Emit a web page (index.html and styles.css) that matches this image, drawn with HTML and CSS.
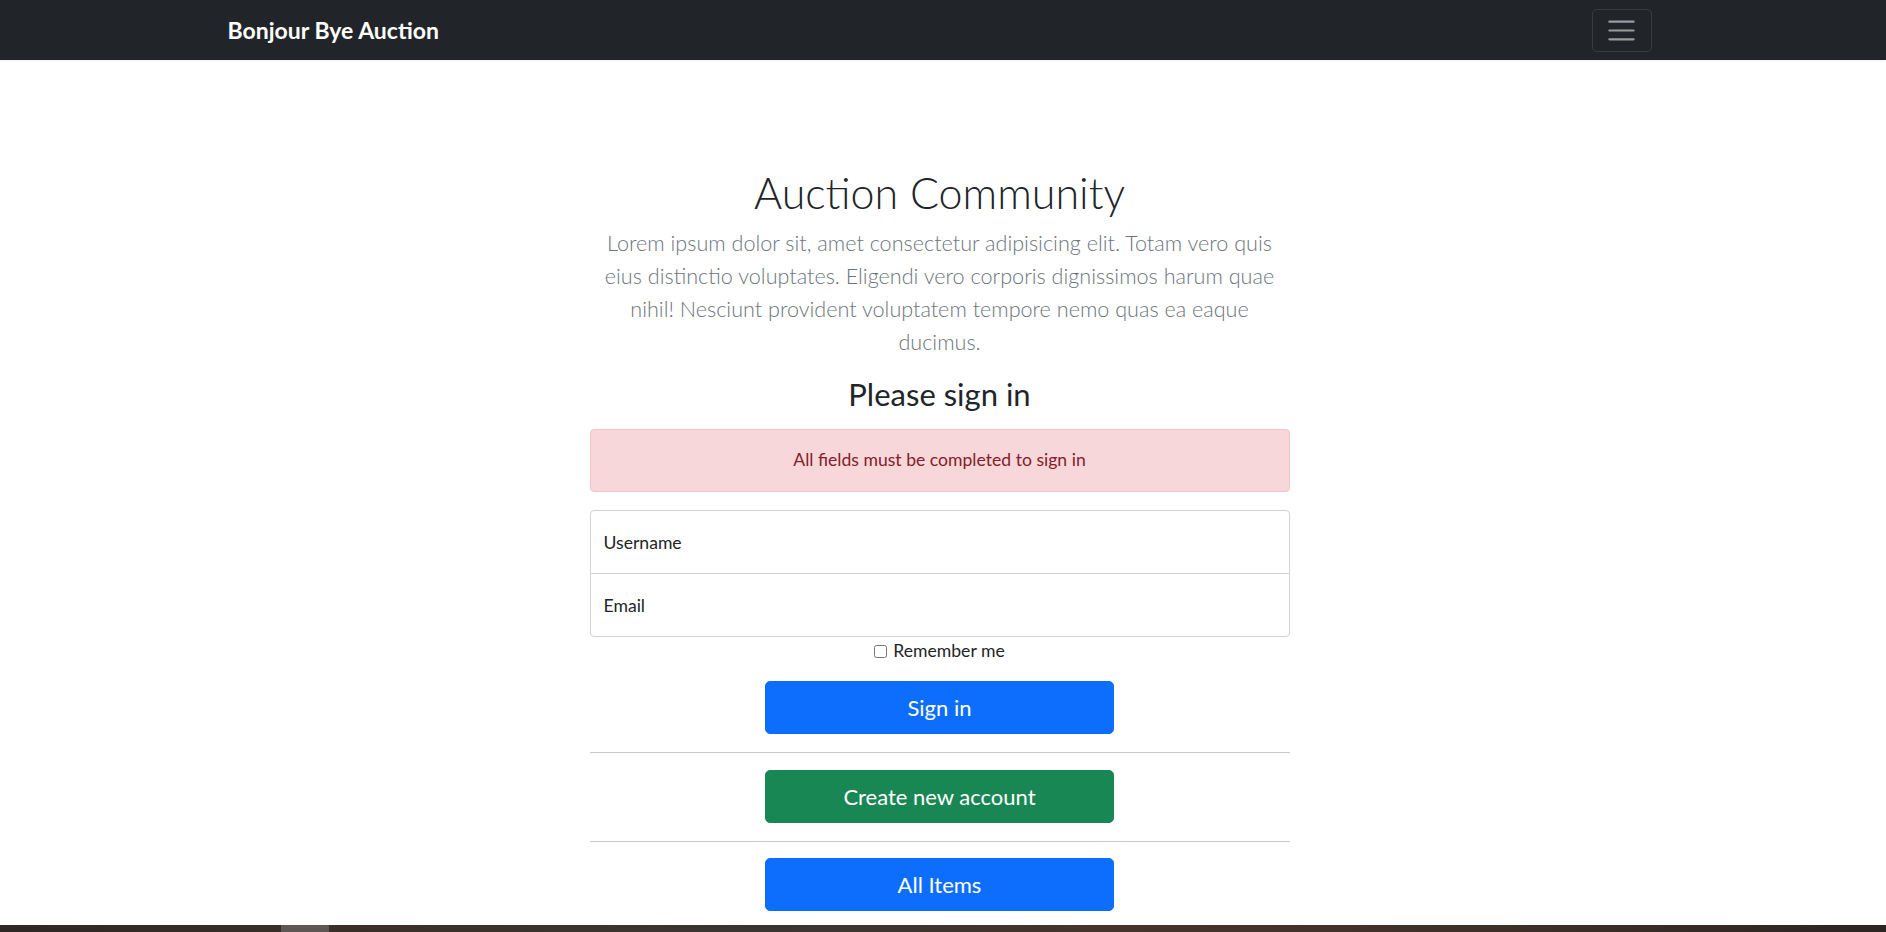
FILE: index.html
```html
<!DOCTYPE html>
<html lang="en">
<head>
<meta charset="utf-8">
<title>Bonjour Bye Auction</title>
<link rel="stylesheet" href="styles.css">
</head>
<body>
<nav class="navbar">
  <div class="nav-inner">
    <a class="brand" href="#">Bonjour Bye Auction</a>
    <button class="toggler" type="button" aria-label="Toggle navigation">
      <svg width="33" height="33" viewBox="0 0 30 30" aria-hidden="true">
        <path d="M4 7h22M4 15h22M4 23h22" stroke="rgba(255,255,255,0.55)" stroke-width="2" stroke-linecap="round" fill="none"/>
      </svg>
    </button>
  </div>
</nav>

<main class="main">
  <section class="intro">
    <h1 class="title">Auction Community</h1>
    <p class="lead">Lorem ipsum dolor sit, amet consectetur adipisicing elit. Totam vero quis eius distinctio voluptates. Eligendi vero corporis dignissimos harum quae nihil! Nesciunt provident voluptatem tempore nemo quas ea eaque ducimus.</p>
  </section>

  <form class="signin">
    <h2 class="signin-title">Please sign in</h2>
    <div class="alert">All fields must be completed to sign in</div>
    <input class="field field-top" type="text" placeholder="Username">
    <input class="field field-bottom" type="email" placeholder="Email">
    <label class="remember"><input type="checkbox"> Remember me</label>
    <button class="btn btn-primary" type="button">Sign in</button>
    <hr class="divider">
    <button class="btn btn-success" type="button">Create new account</button>
    <hr class="divider">
    <button class="btn btn-primary" type="button">All Items</button>
  </form>
</main>

<div class="taskbar"><span class="task-item"></span></div>
</body>
</html>
```
FILE: styles.css
```css
html, body {
  margin: 0;
  padding: 0;
}

html {
  scrollbar-width: none;
}

html::-webkit-scrollbar {
  width: 0;
  height: 0;
  display: none;
}

body {
  font-family: "Lato", "Open Sans", sans-serif;
  font-size: 17.6px;
  line-height: 1.5;
  color: #212529;
  background: #fff;
}

/* Navbar */
.navbar {
  background: #212529;
  height: 60px;
  padding-right: 7px;
  box-shadow: 0 1px 3px rgba(0, 0, 0, 0.06);
}

.nav-inner {
  max-width: 1450px;
  margin: 0 auto;
  padding: 0 13px;
  height: 100%;
  display: flex;
  align-items: center;
  justify-content: space-between;
  box-sizing: border-box;
}

.brand {
  color: #fff;
  font-weight: 700;
  font-size: 23px;
  text-decoration: none;
  line-height: 1.5;
}

.toggler {
  width: 60px;
  height: 43px;
  padding: 0;
  background: transparent;
  border: 1px solid rgba(255, 255, 255, 0.1);
  border-radius: 5px;
  display: flex;
  align-items: center;
  justify-content: center;
}

.toggler svg {
  display: block;
}

/* Main */
.main {
  padding-top: 107px;
  padding-right: 7px;
  display: flex;
  flex-direction: column;
  align-items: center;
}

.intro {
  width: 700px;
  text-align: center;
}

.title {
  margin: 0 0 8px;
  font-size: 43px;
  font-weight: 300;
  line-height: 1.2;
  color: #212529;
}

.lead {
  margin: 0 0 17px;
  font-size: 21.6px;
  font-weight: 300;
  line-height: 33px;
  color: #6c757d;
}

.signin {
  width: 700px;
  display: flex;
  flex-direction: column;
  align-items: center;
}

.signin-title {
  margin: 0 0 16px;
  font-size: 31px;
  font-weight: 400;
  line-height: 1.2;
}

.alert {
  box-sizing: border-box;
  width: 100%;
  padding: 17.6px;
  background: #f8d7da;
  border: 1px solid #f5c2c7;
  border-radius: 4px;
  color: #842029;
  text-align: center;
  line-height: 26.4px;
  margin-bottom: 17.5px;
}

.field {
  box-sizing: border-box;
  width: 100%;
  height: 64.25px;
  padding: 0 13px;
  font: inherit;
  font-size: 17.6px;
  color: #212529;
  border: 1px solid #ced4da;
  background: #fff;
  outline: none;
}

.field::placeholder {
  color: #212529;
  opacity: 1;
}

.field-top {
  border-radius: 4px 4px 0 0;
  margin-bottom: -1px;
}

.field-bottom {
  border-radius: 0 0 4px 4px;
}

.remember {
  display: flex;
  align-items: center;
  line-height: 26.4px;
  margin: 0.5px 0 17px;
}

.remember input {
  width: 13px;
  height: 13px;
  margin: 0 6px 0 0;
}

.btn {
  box-sizing: border-box;
  width: 349px;
  height: 53px;
  border: 1px solid transparent;
  border-radius: 5px;
  color: #fff;
  font: inherit;
  font-size: 22px;
  line-height: 33px;
  padding: 8.8px 17.6px;
  cursor: pointer;
}

.btn-primary {
  background: #0d6efd;
  border-color: #0d6efd;
}

.btn-success {
  background: #198754;
  border-color: #198754;
}

.divider {
  width: 100%;
  margin: 18px 0 16.5px;
  border: 0;
  border-top: 1px solid #c8c9ca;
}

/* Taskbar strip at bottom of screen */
.taskbar {
  position: fixed;
  left: 0;
  right: 0;
  bottom: 0;
  height: 7px;
  background: linear-gradient(90deg, #2f2724 0%, #3b3029 20%, #3a3531 40%, #45342c 60%, #3e2f29 80%, #2d2522 100%);
}

.task-item {
  position: absolute;
  left: 281px;
  top: 0;
  width: 48px;
  height: 7px;
  background: #5d5653;
}
```
